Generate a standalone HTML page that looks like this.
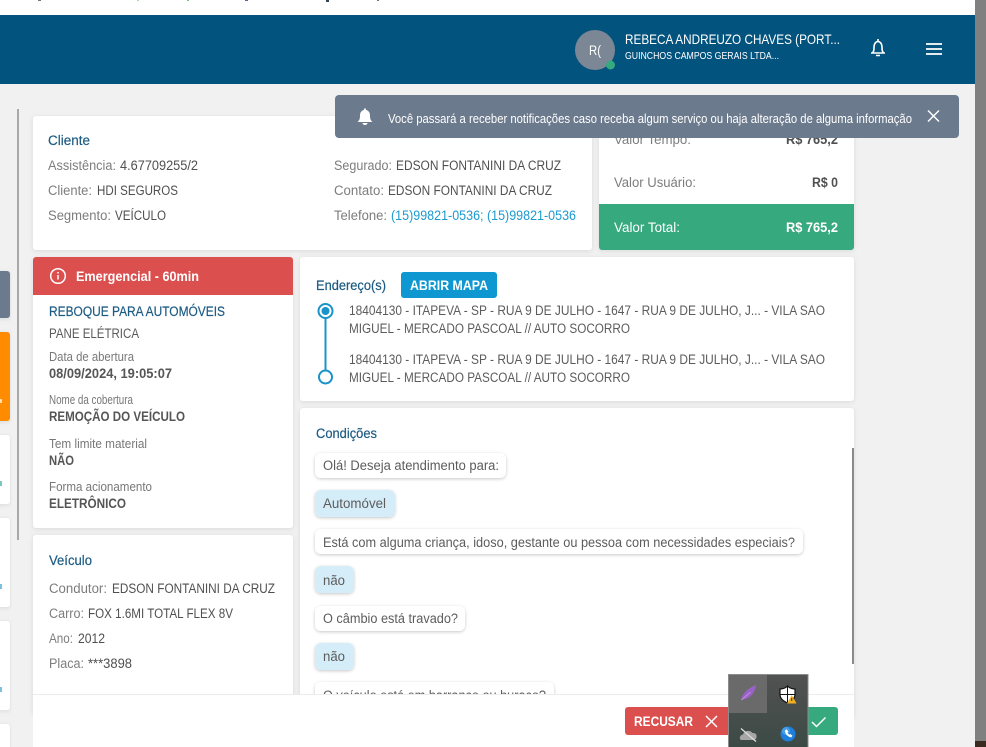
<!DOCTYPE html>
<html lang="pt-BR"><head><meta charset="utf-8"><title>Serviço</title>
<style>
html,body{margin:0;padding:0;background:#f1f1f1;width:986px;height:747px;overflow:hidden}
svg{display:block;position:absolute;left:0;top:0}
text{font-family:"Liberation Sans",sans-serif;font-size:13.5px;fill:#666}
.l{fill:#7d7d7d}.v{fill:#505050}.h{fill:#1c5b82;stroke:#1c5b82;stroke-width:.2px}.w{fill:#fff}
.b{font-weight:700}.s{font-size:12.5px;fill:#777}.a{fill:#5a5a5a}.c{fill:#5c5c5c}
.card{filter:url(#sh)}
</style></head><body>
<svg width="986" height="747" viewBox="0 0 986 747" xmlns="http://www.w3.org/2000/svg">
<defs>
<filter id="sh" x="-10%" y="-10%" width="120%" height="125%"><feDropShadow dx="0" dy="1" stdDeviation="2.5" flood-color="#000" flood-opacity=".1"/></filter>
<filter id="sb" x="-10%" y="-30%" width="120%" height="170%"><feDropShadow dx="0" dy="1" stdDeviation="1.6" flood-color="#000" flood-opacity=".22"/></filter>
<linearGradient id="tr" x1="0" y1="0" x2="0" y2="1"><stop offset="0" stop-color="#525252"/><stop offset="1" stop-color="#3c4a45"/></linearGradient>
</defs>
<rect width="986" height="747" fill="#f1f1f1"/>
<rect width="975" height="15" fill="#fff"/>
<rect x="38" y="0" width="3" height="1" fill="#777"/><rect x="137" y="0" width="2" height="1" fill="#ada"/><rect x="187" y="0" width="2" height="1" fill="#8b8"/><rect x="245" y="0" width="3" height="1" fill="#56a"/><rect x="326" y="0" width="3" height="2" fill="#345"/><rect x="377" y="0" width="2" height="1" fill="#777"/>
<rect y="15" width="975" height="69" fill="#03537f"/>
<circle cx="595" cy="50" r="20" fill="#7b8794"/>
<circle cx="610.500" cy="65" r="4.500" fill="#36a97e"/>
<text x="589" y="55" class="w" textLength="12" lengthAdjust="spacingAndGlyphs" font-size="13">R(</text>
<text x="625" y="44" class="w" textLength="215" lengthAdjust="spacingAndGlyphs" style="font-size:14px">REBECA ANDREUZO CHAVES (PORT...</text>
<text x="625" y="59" class="w" textLength="154" lengthAdjust="spacingAndGlyphs" style="font-size:10.5px">GUINCHOS CAMPOS GERAIS LTDA...</text>
<path d="M871 53h14M872.500 53c1.500-1.500 1.500-3.500 1.500-6 0-3 1.700-5.500 4-5.500s4 2.500 4 5.500c0 2.500 0 4.500 1.500 6M878 39v2.500M876 55.500h4" fill="none" stroke="#fff" stroke-width="1.600"/>
<path d="M926 44h16M926 49h16M926 54h16" stroke="#fff" stroke-width="1.800"/>
<rect x="975" width="11" height="741" fill="#808080"/><rect x="975" y="741" width="11" height="6" fill="#3a2a20"/>

<rect x="17" y="109" width="2" height="431" fill="#a8a8a8"/>
<rect x="-5" y="271" width="15" height="47" rx="3" fill="#6c7a8d" class="card"/>
<rect x="-5" y="332" width="15" height="89" rx="3" fill="#ff8c00" class="card"/>
<rect x="0" y="399" width="2" height="4" fill="#ffe0b0"/>
<rect x="-5" y="435" width="15" height="69" rx="3" fill="#fff" class="card"/>
<rect x="-5" y="518" width="15" height="89" rx="3" fill="#fff" class="card"/>
<rect x="-5" y="621" width="15" height="89" rx="3" fill="#fff" class="card"/>
<rect x="-5" y="724" width="15" height="40" rx="3" fill="#fff" class="card"/>
<rect x="0" y="481" width="2" height="5" fill="#7cc8c0"/><rect x="0" y="584" width="2" height="5" fill="#7cc0e0"/><rect x="0" y="687" width="2" height="5" fill="#7cc0e0"/>

<rect x="33" y="116" width="559" height="134" rx="3" fill="#fff" class="card"/>
<text x="48" y="145" class="h" textLength="42" lengthAdjust="spacingAndGlyphs">Cliente</text>
<text x="48" y="170" class="l" textLength="68" lengthAdjust="spacingAndGlyphs">Assistência:</text><text x="120" y="170" class="v" textLength="78" lengthAdjust="spacingAndGlyphs">4.67709255/2</text>
<text x="48" y="195" class="l" textLength="44" lengthAdjust="spacingAndGlyphs">Cliente:</text><text x="97" y="195" class="v" textLength="81" lengthAdjust="spacingAndGlyphs">HDI SEGUROS</text>
<text x="48" y="220" class="l" textLength="63" lengthAdjust="spacingAndGlyphs">Segmento:</text><text x="115" y="220" class="v" textLength="51" lengthAdjust="spacingAndGlyphs">VEÍCULO</text>
<text x="334" y="170" class="l" textLength="58" lengthAdjust="spacingAndGlyphs">Segurado:</text><text x="396" y="170" class="v" textLength="165" lengthAdjust="spacingAndGlyphs">EDSON FONTANINI DA CRUZ</text>
<text x="334" y="195" class="l" textLength="50" lengthAdjust="spacingAndGlyphs">Contato:</text><text x="388" y="195" class="v" textLength="164" lengthAdjust="spacingAndGlyphs">EDSON FONTANINI DA CRUZ</text>
<text x="334" y="220" class="l" textLength="53" lengthAdjust="spacingAndGlyphs">Telefone:</text><text x="391" y="220" style="fill:#1a9ad0" textLength="185" lengthAdjust="spacingAndGlyphs">(15)99821-0536; (15)99821-0536</text>

<rect x="599" y="116" width="255" height="134" rx="3" fill="#fff" class="card"/>
<text x="614" y="144" class="l" textLength="77" lengthAdjust="spacingAndGlyphs">Valor Tempo:</text><text x="786" y="144" class="v b" textLength="52" lengthAdjust="spacingAndGlyphs">R$ 765,2</text>
<text x="614" y="187" class="l" textLength="82" lengthAdjust="spacingAndGlyphs">Valor Usuário:</text><text x="812" y="187" class="v b" textLength="26" lengthAdjust="spacingAndGlyphs">R$ 0</text>
<path d="M599 204h255v43a3 3 0 0 1-3 3H602a3 3 0 0 1-3-3z" fill="#36a97e"/>
<text x="614" y="232" class="w" textLength="66" lengthAdjust="spacingAndGlyphs">Valor Total:</text><text x="786" y="232" class="w b" textLength="52" lengthAdjust="spacingAndGlyphs">R$ 765,2</text>

<rect x="33" y="257" width="260" height="271" rx="3" fill="#fff" class="card"/>
<path d="M33 295v-35a3 3 0 0 1 3-3h254a3 3 0 0 1 3 3v35z" fill="#dc4f4f"/>
<circle cx="58" cy="276" r="7.300" fill="none" stroke="#fff" stroke-width="1.500"/><path d="M58 275v4.500M58 272v1.500" stroke="#fff" stroke-width="1.500"/>
<text x="76" y="281" class="w b" textLength="123" lengthAdjust="spacingAndGlyphs">Emergencial - 60min</text>
<text x="49" y="316" class="h" textLength="176" lengthAdjust="spacingAndGlyphs">REBOQUE PARA AUTOMÓVEIS</text>
<text x="49" y="338" class="a" textLength="90" lengthAdjust="spacingAndGlyphs">PANE ELÉTRICA</text>
<text x="49" y="361" class="s" textLength="85" lengthAdjust="spacingAndGlyphs">Data de abertura</text>
<text x="49" y="378" class="v" textLength="123" lengthAdjust="spacingAndGlyphs" style="font-weight:700;fill:#555">08/09/2024, 19:05:07</text>
<text x="49" y="404" class="s" textLength="84" lengthAdjust="spacingAndGlyphs">Nome da cobertura</text>
<text x="49" y="421" class="v" textLength="136" lengthAdjust="spacingAndGlyphs" style="font-weight:700;fill:#555">REMOÇÃO DO VEÍCULO</text>
<text x="49" y="448" class="s" textLength="98" lengthAdjust="spacingAndGlyphs">Tem limite material</text>
<text x="49" y="465" class="v" textLength="25" lengthAdjust="spacingAndGlyphs" style="font-weight:700;fill:#555">NÃO</text>
<text x="49" y="491" class="s" textLength="103" lengthAdjust="spacingAndGlyphs">Forma acionamento</text>
<text x="49" y="508" class="v" textLength="77" lengthAdjust="spacingAndGlyphs" style="font-weight:700;fill:#555">ELETRÔNICO</text>

<rect x="33" y="535" width="260" height="180" rx="3" fill="#fff" class="card"/>
<text x="49" y="565" class="h" textLength="43" lengthAdjust="spacingAndGlyphs">Veículo</text>
<text x="49" y="593" class="l" textLength="58" lengthAdjust="spacingAndGlyphs">Condutor:</text><text x="112" y="593" class="v" textLength="163" lengthAdjust="spacingAndGlyphs">EDSON FONTANINI DA CRUZ</text>
<text x="49" y="618" class="l" textLength="35" lengthAdjust="spacingAndGlyphs">Carro:</text><text x="88" y="618" class="v" textLength="145" lengthAdjust="spacingAndGlyphs">FOX 1.6MI TOTAL FLEX 8V</text>
<text x="49" y="643" class="l" textLength="24" lengthAdjust="spacingAndGlyphs">Ano:</text><text x="78" y="643" class="v" textLength="27" lengthAdjust="spacingAndGlyphs">2012</text>
<text x="49" y="668" class="l" textLength="35" lengthAdjust="spacingAndGlyphs">Placa:</text><text x="88" y="668" class="v" textLength="44" lengthAdjust="spacingAndGlyphs">***3898</text>

<rect x="300" y="257" width="554" height="144" rx="3" fill="#fff" class="card"/>
<text x="316" y="290" class="h" textLength="70" lengthAdjust="spacingAndGlyphs">Endereço(s)</text>
<rect x="401" y="272" width="96" height="26" rx="3" fill="#0f97d2"/>
<text x="410" y="290" class="w b" textLength="78" lengthAdjust="spacingAndGlyphs">ABRIR MAPA</text>
<path d="M325.500 318v52" stroke="#1a93c9" stroke-width="2"/>
<circle cx="325.500" cy="311" r="7" fill="#fff" stroke="#1a93c9" stroke-width="2"/><circle cx="325.500" cy="311" r="4" fill="#1a93c9"/>
<circle cx="325.500" cy="377" r="6.500" fill="#fff" stroke="#1a93c9" stroke-width="2"/>
<text x="349" y="315" class="c" textLength="476" lengthAdjust="spacingAndGlyphs">18404130 - ITAPEVA - SP - RUA 9 DE JULHO - 1647 - RUA 9 DE JULHO, J... - VILA SAO</text>
<text x="349" y="333" class="c" textLength="281" lengthAdjust="spacingAndGlyphs">MIGUEL - MERCADO PASCOAL // AUTO SOCORRO</text>
<text x="349" y="364" class="c" textLength="476" lengthAdjust="spacingAndGlyphs">18404130 - ITAPEVA - SP - RUA 9 DE JULHO - 1647 - RUA 9 DE JULHO, J... - VILA SAO</text>
<text x="349" y="382" class="c" textLength="281" lengthAdjust="spacingAndGlyphs">MIGUEL - MERCADO PASCOAL // AUTO SOCORRO</text>

<rect x="300" y="408" width="554" height="310" rx="3" fill="#fff" class="card"/>
<text x="316" y="438" class="h" textLength="61" lengthAdjust="spacingAndGlyphs">Condições</text>
<rect x="315" y="453" width="191" height="25" rx="6" fill="#fff" filter="url(#sb)"/>
<text x="323" y="470" class="c" textLength="176" lengthAdjust="spacingAndGlyphs">Olá! Deseja atendimento para:</text>
<rect x="315" y="490" width="80" height="27" rx="6" fill="#d5edf8" filter="url(#sb)"/>
<text x="323" y="508" class="c" textLength="63" lengthAdjust="spacingAndGlyphs">Automóvel</text>
<rect x="315" y="529" width="488" height="25" rx="6" fill="#fff" filter="url(#sb)"/>
<text x="323" y="547" class="c" textLength="472" lengthAdjust="spacingAndGlyphs">Está com alguma criança, idoso, gestante ou pessoa com necessidades especiais?</text>
<rect x="315" y="566" width="39" height="27" rx="6" fill="#d5edf8" filter="url(#sb)"/>
<text x="323" y="585" class="c" textLength="22" lengthAdjust="spacingAndGlyphs">não</text>
<rect x="315" y="606" width="150" height="25" rx="6" fill="#fff" filter="url(#sb)"/>
<text x="323" y="623" class="c" textLength="135" lengthAdjust="spacingAndGlyphs">O câmbio está travado?</text>
<rect x="315" y="643" width="39" height="27" rx="6" fill="#d5edf8" filter="url(#sb)"/>
<text x="323" y="661" class="c" textLength="22" lengthAdjust="spacingAndGlyphs">não</text>
<rect x="315" y="682" width="239" height="25" rx="6" fill="#fff" filter="url(#sb)"/>
<text x="323" y="700" class="c" textLength="223" lengthAdjust="spacingAndGlyphs">O veículo está em barranco ou buraco?</text>
<rect x="852" y="448" width="2" height="216" fill="#8a8a8a"/>

<rect x="33" y="694" width="821" height="53" fill="#fff"/>
<rect x="33" y="694" width="821" height="1" fill="#ececec"/>
<rect x="625" y="707" width="110" height="28" rx="3" fill="#dc4f4f"/>
<text x="634" y="726" class="w b" textLength="59" lengthAdjust="spacingAndGlyphs">RECUSAR</text>
<path d="M706 716l11 11M717 716l-11 11" stroke="#fff" stroke-width="1.500"/>
<rect x="790" y="707" width="48" height="28" rx="3" fill="#36a97e"/>
<path d="M812 722l4.500 4.500 9-9" fill="none" stroke="#fff" stroke-width="1.500"/>

<rect x="335" y="95" width="624" height="43" rx="4" fill="#6c7a8d"/>
<path d="M357.500 122c2-1.500 2.500-3.500 2.500-6.500 0-3 1.700-5 4-5.600 0-.9.3-1.700 1-1.700s1 .8 1 1.700c2.300.6 4 2.600 4 5.600 0 3 .5 5 2.500 6.500zM362.500 123h5c0 1.200-1.200 2-2.500 2s-2.500-.8-2.500-2z" fill="#fff"/>
<text x="388" y="123" class="w" textLength="524" lengthAdjust="spacingAndGlyphs" style="font-size:12.500px">Você passará a receber notificações caso receba algum serviço ou haja alteração de alguma informação</text>
<path d="M928 110.500l11 11M939 110.500l-11 11" stroke="#fff" stroke-width="1.500"/>

<rect x="728" y="674" width="80.500" height="73" fill="url(#tr)"/>
<path d="M728.500 747V674.500H808V747" fill="none" stroke="#8c8c8c"/>
<rect x="729" y="675" width="38" height="38" fill="#6a6a6a"/>
<path d="M741 700c1-6 7-12 15-15-1 7-5 13-11 14-1.500.3-3 .2-4 1z" fill="#9a62c8"/><path d="M741.500 700l9-8" stroke="#c9a0e8" stroke-width=".8"/>
<path d="M780 689c3 0 5.500-1 7.500-3 2 2 4.500 3 7.500 3v5.500c0 4-3 6.500-7.500 8.500-4.500-2-7.500-4.500-7.500-8.500z" fill="#fff" stroke="#111" stroke-width="1.200"/><path d="M787.500 686v17M780 694.500h15" stroke="#111"/>
<path d="M787 703.500l4.700-8.500 4.800 8.500z" fill="#f0b020"/><path d="M791.700 698v3" stroke="#333"/>
<path d="M741 740c-2-1-1.500-5 2-5.500 1-4 7-5 9.500-1.500 3 0 4.500 1 4 4.500-.3 1.500-1.500 2.500-3 2.500z" fill="#a6a6a6"/><path d="M741 728.500l15 13" stroke="#ddd" stroke-width="1.300"/>
<circle cx="788" cy="734" r="7.500" fill="#1e80dc"/><circle cx="786" cy="731" r="4" fill="#5fb0ee" opacity=".6"/><path d="M785 730.500c0 3.500 2.500 6 6 7l1.500-1.800-2.200-1.700-1.100.8-1.700-2 .8-1.200-1.800-2.300z" fill="#fff"/>
</svg>
</body></html>
